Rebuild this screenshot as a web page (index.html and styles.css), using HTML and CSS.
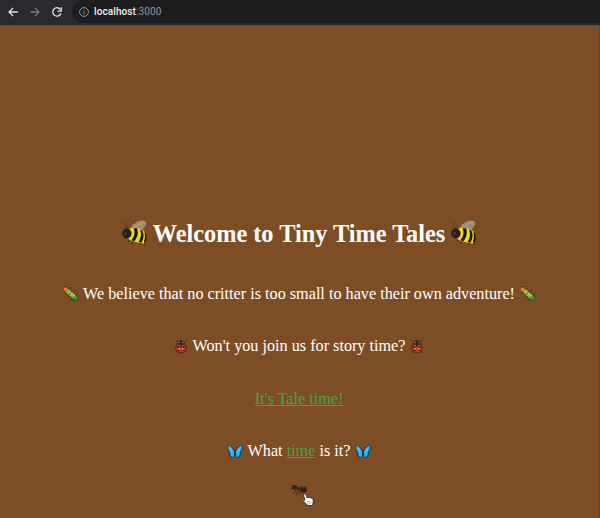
FILE: index.html
```html
<!DOCTYPE html>
<html lang="en">
<head>
<meta charset="utf-8">
<title>Tiny Time Tales</title>
<link rel="stylesheet" href="styles.css">
</head>
<body>
<svg class="symbols" aria-hidden="true">
  <symbol id="bee" viewBox="0 0 24 25">
    <path d="M4 9 3 5 1 3M6 9 5 4l-2-2" fill="none" stroke="#4a3320" stroke-width=".6"/>
    <path d="M8 10C8 5 14 1 19 0.500c4-.3 5 2 3.500 5C21 8 19 10 17 11Z" fill="#a28c78"/>
    <path d="M10 8c4-2 7-5 11-6" fill="none" stroke="#b19c88" stroke-width="1"/>
    <path d="m7 17-1 4M11 20l-2 3M16 21l1 3M20 20l2 4" stroke="#3b2f18" stroke-width="1"/>
    <path d="M6 9c4-2 13-2 16 3 1.500 4 .5 9-1 10.500C17 22 9 21 6 18Z" fill="#f3d81d"/>
    <path d="M11 8c2 3 1 8-2 11.500l3 1c3-4 4-8 2.500-12.500ZM17 9c2 3 1.500 8-1 12l2.500 1c2.500-4 3-8 1-12ZM21.500 12c1 3 .5 6-.5 9l1.500 1c1.500-4 1.500-7 0-10Z" fill="#17150b"/>
    <ellipse cx="4.700" cy="13" rx="4.500" ry="4.800" fill="#25211a"/>
    <ellipse cx="3.300" cy="13.300" rx="1.300" ry="1.800" fill="#3d3a26"/>
  </symbol>
  <symbol id="caterpillar" viewBox="0 0 16 16">
    <path d="m3 7-1 2M6 10l-1 2M9 13l-1 2M8 3l1-2M11 6l2-2M14 9l1-1" stroke="#3d3018" stroke-width=".9"/>
    <path d="M3 3.500 13 12.500" stroke="#39451a" stroke-width="6.400" stroke-linecap="round"/>
    <circle cx="2.900" cy="3.700" r="2.600" fill="#d95a30"/>
    <circle cx="5.800" cy="6.100" r="2.600" fill="#a9b838"/>
    <circle cx="8.300" cy="8.400" r="2.600" fill="#8db436"/>
    <circle cx="10.800" cy="10.500" r="2.600" fill="#acc44d"/>
    <circle cx="13.200" cy="12.600" r="2.200" fill="#5f9334"/>
    <path d="m4.500 7 2-2.500M7 9.300l2.500-3M9.600 11.500l2.500-3" stroke="#3b521e" stroke-width=".8"/>
    <path d="m6 5.500 1 .6M8.500 7.500l1 .6M11 9.500l1 .6" stroke="#f0ed86" stroke-width="1.300"/>
    <circle cx="2.300" cy="3.200" r=".8" fill="#efc985"/>
  </symbol>
  <symbol id="ladybug" viewBox="0 0 14 16">
    <path d="m1 1.500 3 3M13 1.500l-3 3M3 13l-2 2M11 13l2 2" fill="none" stroke="#3a291f" stroke-width=".7"/>
    <ellipse cx="7" cy="9.500" rx="5.200" ry="5.400" fill="#c8401f" stroke="#3e1b12" stroke-width=".9"/>
    <path d="M3 6c.3-5 7.700-5 8 0-2 1.200-6 1.200-8 0Z" fill="#25282a"/>
    <circle cx="4.200" cy="9" r="1" fill="#42120d"/><circle cx="9.800" cy="9" r="1" fill="#42120d"/>
    <circle cx="7" cy="8" r=".9" fill="#42120d"/>
    <circle cx="5.200" cy="12.400" r=".8" fill="#42120d"/><circle cx="8.800" cy="12.400" r=".8" fill="#42120d"/>
    <circle cx="5" cy="4.500" r=".7" fill="#a9aaa8"/><circle cx="9" cy="4.500" r=".7" fill="#a9aaa8"/>
    <path d="M4.500 11h1.500M8 11h1.500" stroke="#f58f35" stroke-width="1.300"/>
  </symbol>
  <symbol id="butterfly" viewBox="0 0 16 15">
    <path d="M7.800 7C6 2.500 3 .3.300.7c0 3.600.2 5.800 1.900 7.300C1.900 12 3.500 14.300 6 14.300 7.500 13 8 10 8 8.500c0 1.500.5 4.500 2 5.800 2.500 0 4.100-2.300 3.800-6.300C15.500 6.500 15.700 4.300 15.700.7 13 .3 10 2.500 8.200 7Z" fill="#1b3c57"/>
    <path d="M7.100 7.500C5.500 3.800 3.500 1.900 1.100 1.600c0 3.300.5 5.100 2.100 6.200-.4 3.400.7 5.300 2.600 5.600C7.100 11.500 7.400 9.500 7.100 7.500ZM8.900 7.500C10.500 3.800 12.500 1.900 14.900 1.600c0 3.300-.5 5.100-2.100 6.200.4 3.400-.7 5.300-2.600 5.600C8.900 11.500 8.600 9.500 8.900 7.500Z" fill="#2fb0f5"/>
    <path d="M2.800 4 5 8M13.200 4 11 8" fill="none" stroke="#62cafc" stroke-width="1.200"/>
    <path d="M8 5v6" stroke="#241d1b" stroke-width=".8"/>
  </symbol>
</svg>

<header class="toolbar">
  <svg class="nav" viewBox="0 0 10 10"><path d="M9.700 5H1M5 1 1 5l4 4"/></svg>
  <svg class="nav nav-off" viewBox="0 0 10 10"><path d="M.3 5H9M5 1l4 4-4 4"/></svg>
  <svg class="nav" viewBox="0 0 10 10"><path d="M9 6.200A4.200 4.200 0 1 1 8.500 2.600"/><path d="M9.300.2v3.900H5.500"/></svg>
  <div class="address">
    <svg class="info" viewBox="0 0 10 10"><circle cx="5" cy="5" r="4.400"/><path d="M5 4.500v3M5 2.500v1"/></svg>
    <span class="host">localhost</span><span>:3000</span>
  </div>
</header>

<main class="page">
  <h1 class="line title"><svg class="bee"><use href="#bee"/></svg><span>Welcome to Tiny Time Tales</span><svg class="bee"><use href="#bee"/></svg></h1>
  <p class="line tagline"><svg class="caterpillar"><use href="#caterpillar"/></svg><span>We believe that no critter is too small to have their own adventure!</span><svg class="caterpillar"><use href="#caterpillar"/></svg></p>
  <p class="line invite"><svg class="ladybug"><use href="#ladybug"/></svg><span>Won't you join us for story time?</span><svg class="ladybug"><use href="#ladybug"/></svg></p>
  <p class="line"><a href="#tale">It's Tale time!</a></p>
  <p class="line clock"><svg class="butterfly"><use href="#butterfly"/></svg><span>What <a href="#time">time</a> is it?</span><svg class="butterfly"><use href="#butterfly"/></svg></p>
  <div class="ant-box">
    <svg class="ant" viewBox="0 0 17 13">
      <path d="M5 5 3 10M7 6l-2 6M8 6l1 4M10 6l2 4M3 3 0 5M13 5l3-3" fill="none" stroke="#3a261b" stroke-width=".8"/>
      <ellipse cx="3.500" cy="3.200" rx="2.900" ry="2.300" fill="#30231e"/>
      <ellipse cx="7.800" cy="4.600" rx="2.600" ry="1.700" fill="#412a1e"/>
      <ellipse cx="12.500" cy="5.400" rx="3.300" ry="3" fill="#2a211f"/>
      <path d="m2.500 2.500 1-.5M11 4.300l2-.7" stroke="#66534b" stroke-width=".8"/>
    </svg>
    <svg class="pointer" viewBox="0 0 12 14"><path d="M2 1.200C3 .5 3.700 1 4 2l1 3c.5-1 1.500-1 2 0 .7-.8 1.600-.6 2 .3.8-.5 1.700-.2 1.900.8.5 2 .5 3.500-.3 5v1.400H5.500C4.500 10.500 2.500 9.500 1 8c-.4-1 .8-1.700 2-.6L1.600 2.500Z" fill="#fff" stroke="#27211e" stroke-width=".8"/><path d="M6 8v2.500M8 8v2.500" stroke="#555" stroke-width=".6"/></svg>
  </div>
</main>
</body>
</html>
```

FILE: styles.css
```css
* { box-sizing: border-box; }
body {
  margin: 0;
  height: 518px;
  overflow: hidden;
  background: #7d4e26;
  color: #fff;
  font-family: "Liberation Serif", "Times New Roman", serif;
}
svg { flex: none; }
.symbols { position: absolute; width: 0; height: 0; }
.toolbar {
  display: flex;
  align-items: center;
  height: 26px;
  padding: 0 0 2px 8px;
  background: #292a2e;
  border-bottom: 1px solid #514942;
}
.nav {
  width: 10px;
  height: 10px;
  margin-right: 12px;
  fill: none;
  stroke: #e2e3e5;
  stroke-width: 1.3;
  overflow: visible;
}
.nav-off { stroke: #77787b; }
.address {
  display: flex;
  flex: 1;
  align-items: center;
  height: 23px;
  margin-left: -2px;
  padding-left: 7px;
  border-radius: 12px 0 0 12px;
  background: #1c1d1f;
  color: #929396;
  font: 10px Roboto, sans-serif;
  letter-spacing: 0.1px;
}
.info {
  width: 10px;
  height: 10px;
  margin-right: 5px;
  fill: none;
  stroke: #939497;
}
.host { color: #f0f0f1; font-weight: 500; }
.page {
  display: flex;
  flex-direction: column;
  align-items: center;
  height: 492px;
  padding-top: 192px;
  padding-right: 1px;
  border-right: 1px solid #594534;
}
.line {
  display: flex;
  align-items: center;
  justify-content: center;
  height: 20px;
  margin: 0 0 32.5px;
  font-size: 16.2px;
  line-height: 20px;
  white-space: nowrap;
}
.title {
  height: 32px;
  margin-bottom: 33.5px;
  gap: 6px;
  font-size: 24.3px;
  line-height: 32px;
}
.tagline, .invite, .clock { gap: 5px; }
.bee { width: 25px; height: 26px; margin-top: -2px; }
.caterpillar { width: 15px; height: 15px; }
.ladybug { width: 14px; height: 16px; }
.butterfly { width: 16px; height: 15px; }
a { color: #48a53c; text-decoration: underline; }
.ant-box { position: relative; margin-top: -10px; }
.ant { display: block; width: 17px; height: 13px; }
.pointer { position: absolute; top: 9px; left: 11px; width: 12px; height: 14px; }
```
